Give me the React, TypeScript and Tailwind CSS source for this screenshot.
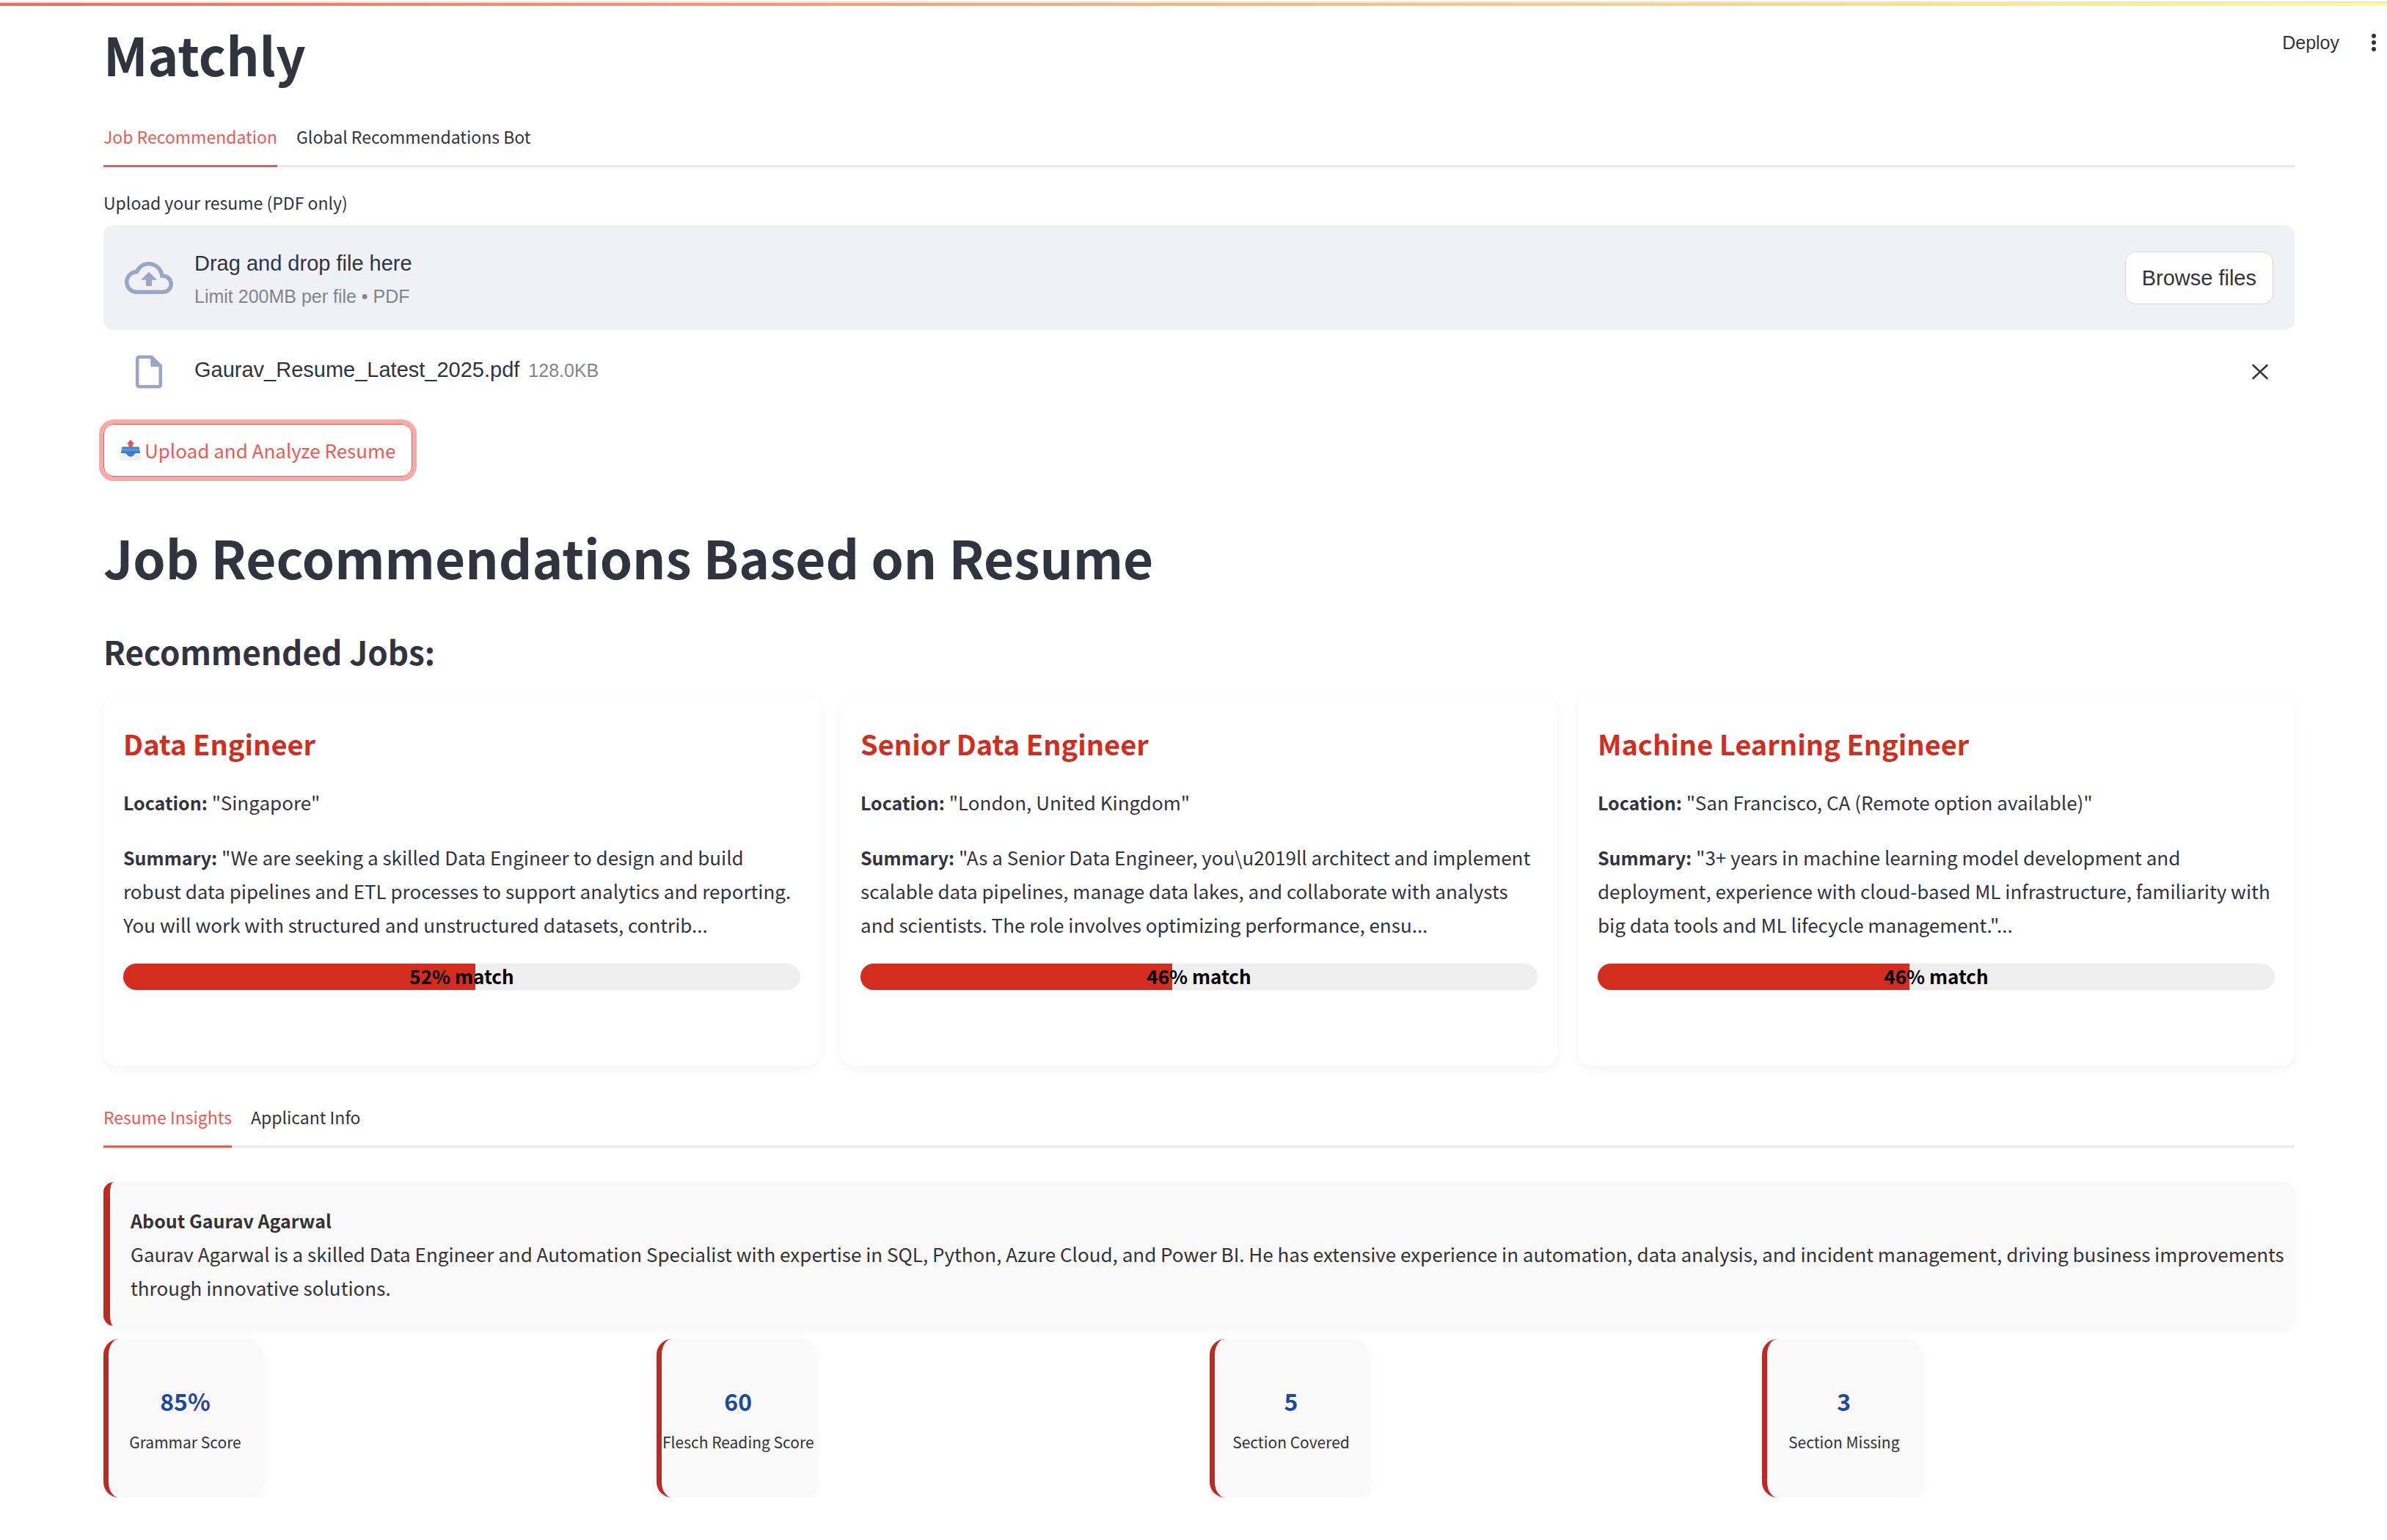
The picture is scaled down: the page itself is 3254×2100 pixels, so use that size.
import { useState } from "react";

const jobs = [
  {
    title: "Data Engineer",
    location: '"Singapore"',
    summary:
      '"We are seeking a skilled Data Engineer to design and build robust data pipelines and ETL processes to support analytics and reporting. You will work with structured and unstructured datasets, contrib...',
    match: 52,
  },
  {
    title: "Senior Data Engineer",
    location: '"London, United Kingdom"',
    summary:
      '"As a Senior Data Engineer, you\\u2019ll architect and implement scalable data pipelines, manage data lakes, and collaborate with analysts and scientists. The role involves optimizing performance, ensu...',
    match: 46,
  },
  {
    title: "Machine Learning Engineer",
    location: '"San Francisco, CA (Remote option available)"',
    summary:
      '"3+ years in machine learning model development and deployment, experience with cloud-based ML infrastructure, familiarity with big data tools and ML lifecycle management."...',
    match: 46,
  },
];

const metrics = [
  { value: "85%", label: "Grammar Score" },
  { value: "60", label: "Flesch Reading Score" },
  { value: "5", label: "Section Covered" },
  { value: "3", label: "Section Missing" },
];

function Tabs({ items, className }: { items: string[]; className: string }) {
  const [active, setActive] = useState(0);
  return (
    <div
      role="tablist"
      className={`flex gap-[26px] text-[23px] leading-9 shadow-[inset_0_-3px_0_#e9e9ea] ${className}`}
    >
      {items.map((item, i) => (
        <button
          key={item}
          type="button"
          role="tab"
          aria-selected={i === active}
          onClick={() => setActive(i)}
          className={
            i === active
              ? "border-b-[3px] border-[#ec5a53] pb-[21px] text-[#ec5a53]"
              : "border-b-[3px] border-transparent pb-[21px]"
          }
        >
          {item}
        </button>
      ))}
    </div>
  );
}

function CloudIcon() {
  return (
    <svg viewBox="0 0 24 24" className="size-[66px] shrink-0 fill-[#9ba6c6]" aria-hidden="true">
      <path d="M19.35 10.04A7.49 7.49 0 0 0 12 4C9.11 4 6.6 5.64 5.35 8.04A5.994 5.994 0 0 0 0 14c0 3.31 2.69 6 6 6h13c2.76 0 5-2.24 5-5 0-2.64-2.05-4.78-4.65-4.96zM19 18H6c-2.21 0-4-1.79-4-4 0-2.05 1.53-3.76 3.56-3.97l1.07-.11.5-.95A5.469 5.469 0 0 1 12 6c2.62 0 4.88 1.86 5.39 4.43l.3 1.5 1.53.11A2.98 2.98 0 0 1 22 15c0 1.65-1.35 3-3 3zM8 13h2.55v3h2.9v-3H16l-4-4z" />
    </svg>
  );
}

function FileIcon() {
  return (
    <svg viewBox="0 0 24 24" className="size-[54px] shrink-0 fill-[#9ba6c6]" aria-hidden="true">
      <path d="M14 2H6c-1.1 0-1.99.9-1.99 2L4 20c0 1.1.89 2 1.99 2H18c1.1 0 2-.9 2-2V8l-6-6zM6 20V4h7v5h5v11H6z" />
    </svg>
  );
}

function OutboxIcon() {
  return (
    <svg viewBox="0 0 30 30" className="size-[30px] shrink-0" aria-hidden="true">
      <defs>
        <linearGradient id="tray" x1="0" y1="0" x2="0" y2="1">
          <stop offset="0" stopColor="#3566a8" />
          <stop offset="0.35" stopColor="#5a9be6" />
          <stop offset="1" stopColor="#2f6cc0" />
        </linearGradient>
      </defs>
      <path d="M3.4 10.5h23.2l2.2 9v8.3a1 1 0 0 1-1 1H2.2a1 1 0 0 1-1-1v-8.3z" fill="#dfe1e0" />
      <path d="M3.4 10.5h23.2l1.6 9H1.8z" fill="url(#tray)" />
      <path d="M1.2 19h6.3c1.3 0 1.9.8 2.5 1.8.9 1.6 2.6 2.9 5 2.9s4.1-1.3 5-2.9c.6-1 1.2-1.8 2.5-1.8h6.3v8.8a1 1 0 0 1-1 1H2.2a1 1 0 0 1-1-1z" fill="#f1f0ed" />
      <path d="M7.5 19h15c-1.3 0-1.9.8-2.5 1.8-.9 1.6-2.6 2.9-5 2.9s-4.1-1.3-5-2.9C9.4 19.8 8.8 19 7.5 19z" fill="#3c7bd0" />
      <path d="M15 .8l5.400 5.700h-2.600v4h-5.600v-4H9.600z" fill="#e2574c" />
    </svg>
  );
}

export default function App() {
  return (
    <div className="min-h-screen bg-white font-['Noto_Sans_CJK_SC',sans-serif] text-[26px] leading-[46px] text-[#31333f]">
      <div className="h-2 border-t-2 border-white bg-[linear-gradient(#e2e3e8,#e2e3e8),linear-gradient(to_right,#ee6b5e,#f9ac70_45%,#fffd92)] bg-[length:100%_2px,100%_100%] bg-no-repeat" />

      <header className="flex justify-between pt-[18px] pr-[14px] pl-[141px]">
        <h1 className="text-[71px] leading-[94px] font-bold">Matchly</h1>
        <div className="flex h-[64px] items-center gap-[43px] font-['Liberation_Sans',sans-serif]">
          <button type="button" className="text-[25px] leading-[28px]">
            Deploy
          </button>
          <button type="button" aria-label="Main menu">
            <svg viewBox="0 0 8 24" className="h-6 w-2 fill-[#31333f]" aria-hidden="true">
              <circle cx="4" cy="3" r="3" />
              <circle cx="4" cy="12" r="3" />
              <circle cx="4" cy="21" r="3" />
            </svg>
          </button>
        </div>
      </header>

      <main className="pr-[126px] pb-14 pl-[141px]">
        <Tabs items={["Job Recommendation", "Global Recommendations Bot"]} className="mt-12" />

        <label htmlFor="resume" className="mt-[30px] block text-[23px] leading-9">
          Upload your resume (PDF only)
        </label>
        <input id="resume" type="file" accept="application/pdf" className="sr-only" />
        <section className="mt-[13px] flex h-[143px] items-center gap-[29px] rounded-[14px] bg-[#f0f1f6] px-[29px] font-['Liberation_Sans',sans-serif]">
          <CloudIcon />
          <div className="flex-1 pt-1.5 leading-[45px]">
            <div className="text-[29px]">Drag and drop file here</div>
            <div className="text-[25px] text-[#83848b]">Limit 200MB per file • PDF</div>
          </div>
          <button
            type="button"
            className="h-[72px] rounded-[14px] border border-[#d6d6d9] bg-white px-[22px] text-[29px]"
          >
            Browse files
          </button>
        </section>

        <div className="mt-[30px] flex items-center px-[35px] font-['Liberation_Sans',sans-serif]">
          <FileIcon />
          <div className="ml-[35px] flex flex-1 items-baseline gap-3 pb-1.5 text-[29px]">
            <span>Gaurav_Resume_Latest_2025.pdf</span>
            <small className="text-[25px] text-[#83848b]">128.0KB</small>
          </div>
          <button type="button" aria-label="Remove file">
            <svg viewBox="0 0 24 24" className="size-6 fill-none stroke-[#31333f] stroke-[2.5]" strokeLinecap="round" aria-hidden="true">
              <path d="M2.5 3l19 18M21.5 3l-19 18" />
            </svg>
          </button>
        </div>

        <button
          type="button"
          className="mt-11 flex h-[72px] items-center gap-1 rounded-[14px] border border-[#ec5a53] px-[21px] leading-[44px] text-[#ec5a53] ring-[6px] ring-[#f7aaa8]"
        >
          <OutboxIcon />
          Upload and Analyze Resume
        </button>

        <h1 className="mt-[62px] text-[71px] leading-[94px] font-bold">
          Job Recommendations Based on Resume
        </h1>
        <h3 className="mt-[52px] text-[44px] leading-[60px] font-bold">Recommended Jobs:</h3>

        <div className="mt-[31px] grid grid-cols-3 gap-7">
          {jobs.map((job) => (
            <article
              key={job.title}
              className="rounded-[20px] bg-white px-[27px] pt-[39px] pb-[104px] shadow-[0_4px_14px_rgba(0,0,0,0.05)]"
            >
              <h4 className="text-[38px] leading-[52px] font-bold text-[#d32d20]">{job.title}</h4>
              <p className="mt-[31px]">
                <strong className="text-[25px]">Location:</strong> {job.location}
              </p>
              <p className="mt-[29px]">
                <strong className="text-[25px]">Summary:</strong> {job.summary}
              </p>
              <div className="relative mt-[30px] h-9 rounded-full bg-[#efefef]">
                <div className="h-full rounded-l-full bg-[#d32d20]" style={{ width: `${job.match}%` }} />
                <div className="absolute inset-0 text-center leading-[34px] font-bold text-black">
                  {job.match}% match
                </div>
              </div>
            </article>
          ))}
        </div>

        <Tabs items={["Resume Insights", "Applicant Info"]} className="mt-[51px]" />

        <section className="mt-[47px] rounded-[14px] border-l-[9px] border-[#bd2a22] bg-[#f9f9f9] py-[29px] pr-2 pl-7 text-[#333] shadow-[0_4px_14px_rgba(0,0,0,0.05)]">
          <strong className="block text-[25px]">About Gaurav Agarwal</strong>
          <p>
            Gaurav Agarwal is a skilled Data Engineer and Automation Specialist with expertise in SQL,
            Python, Azure Cloud, and Power BI. He has extensive experience in automation, data analysis,
            and incident management, driving business improvements through innovative solutions.
          </p>
        </section>

        <div className="grid grid-cols-4 gap-7 overflow-hidden pt-[18px]">
          {metrics.map((metric) => (
            <div
              key={metric.label}
              className="flex size-[216px] flex-col items-center justify-center rounded-[21px] border-l-[7px] border-[#bd2a22] bg-[#f9f9f9] pt-[3px] whitespace-nowrap shadow-[0_4px_14px_rgba(0,0,0,0.06)]"
            >
              <div className="text-[32px] leading-[60px] font-bold text-[#1f479b]">{metric.value}</div>
              <div className="text-[21px] leading-[52px] text-[#333]">{metric.label}</div>
            </div>
          ))}
        </div>
      </main>
    </div>
  );
}
